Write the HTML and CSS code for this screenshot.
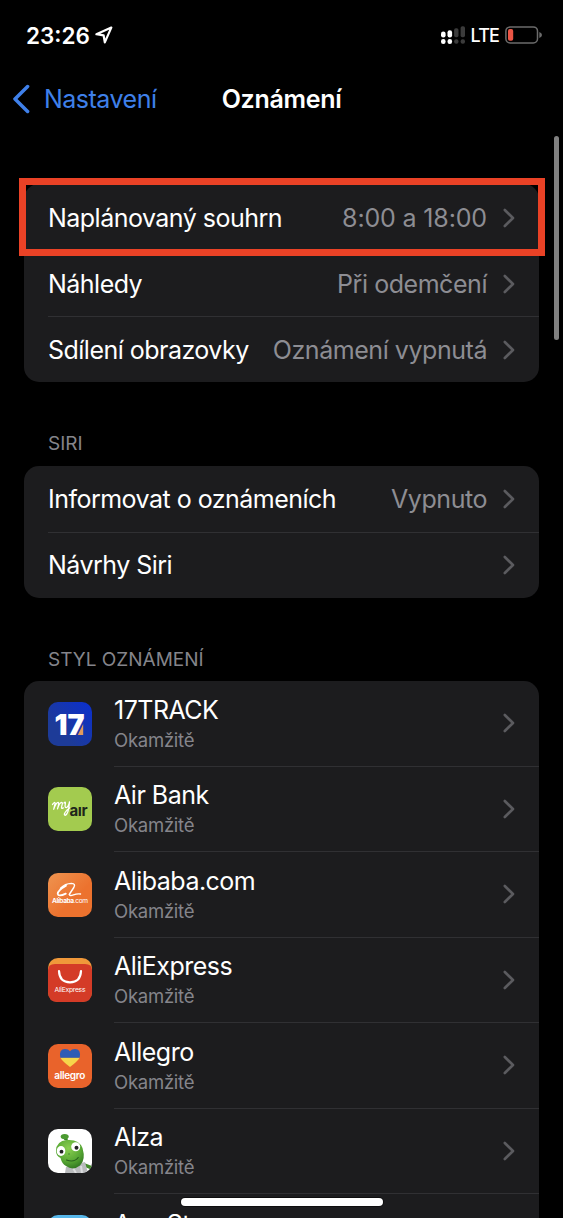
FILE: index.html
```html
<!DOCTYPE html>
<html lang="cs">
<head>
  <meta charset="UTF-8">
  <meta name="viewport" content="width=device-width, initial-scale=1">
  <title>Oznámení</title>
  <link rel="stylesheet" href="styles.css">
</head>
<body>

  <svg class="symbols">
    <symbol id="chevron" viewBox="0 0 12 20">
      <path d="M1.800 2 L10 10 L1.800 18" fill="none" stroke="currentColor" stroke-width="2.600" stroke-linecap="round" stroke-linejoin="round"/>
    </symbol>
  </svg>

  <header class="status-bar">
    <span class="time">23:26</span>
    <svg class="location" viewBox="0 0 18 18">
      <path d="M16.300 1.600 L1.400 8.200 L8.600 9.300 L9.800 16.400 Z" fill="none" stroke="#fff" stroke-width="2.200" stroke-linejoin="round"/>
    </svg>
    <svg class="signal" viewBox="0 0 25 19">
      <g fill="#fff">
        <rect x="0" y="5.500" width="4.600" height="6" rx="2.200"/>
        <rect x="6.500" y="4.300" width="4.600" height="7.200" rx="2.200"/>
        <rect x="0" y="13" width="4.600" height="5" rx="2.200"/>
        <rect x="6.500" y="13" width="4.600" height="5" rx="2.200"/>
      </g>
      <g fill="#3b3b3b">
        <rect x="13.100" y="2.300" width="4.400" height="9" rx="1.800"/>
        <rect x="19.600" y="0.300" width="4.400" height="11" rx="1.800"/>
        <rect x="13.100" y="13.200" width="4.400" height="4.600" rx="2"/>
        <rect x="19.600" y="13.200" width="4.400" height="4.600" rx="2"/>
      </g>
    </svg>
    <span class="network">LTE</span>
    <svg class="battery" viewBox="0 0 38 18">
      <rect x="0.900" y="0.900" width="31.600" height="16" rx="4.200" fill="none" stroke="#6b6b6b" stroke-width="1.500"/>
      <rect x="3" y="3.100" width="5.200" height="11.600" rx="1.800" fill="#eb5545"/>
      <path d="M34.300 6 Q37 7 37 8.900 Q37 10.800 34.300 11.900 Z" fill="#6b6b6b"/>
    </svg>
  </header>

  <nav class="nav-bar">
    <a class="back" href="#">
      <svg viewBox="0 0 18 30"><path d="M15.600 2.600 L3 15 L15.600 27.400" fill="none" stroke="currentColor" stroke-width="3.500" stroke-linecap="round" stroke-linejoin="round"/></svg>
      <span>Nastavení</span>
    </a>
    <h1>Oznámení</h1>
  </nav>

  <main>
    <section class="card">
      <div class="row highlighted">
        <span class="label">Naplánovaný souhrn</span>
        <span class="value time-value">8:00 a 18:00</span>
        <svg class="chevron"><use href="#chevron"/></svg>
      </div>
      <div class="row">
        <span class="label">Náhledy</span>
        <span class="value">Při odemčení</span>
        <svg class="chevron"><use href="#chevron"/></svg>
      </div>
      <div class="row">
        <span class="label">Sdílení obrazovky</span>
        <span class="value">Oznámení vypnutá</span>
        <svg class="chevron"><use href="#chevron"/></svg>
      </div>
    </section>

    <h2>SIRI</h2>
    <section class="card">
      <div class="row">
        <span class="label">Informovat o oznámeních</span>
        <span class="value">Vypnuto</span>
        <svg class="chevron"><use href="#chevron"/></svg>
      </div>
      <div class="row">
        <span class="label">Návrhy Siri</span>
        <svg class="chevron"><use href="#chevron"/></svg>
      </div>
    </section>

    <h2>STYL OZNÁMENÍ</h2>
    <section class="card apps">
      <div class="app">
        <svg class="icon" viewBox="0 0 44 44">
          <defs><linearGradient id="blue" x1="0" y1="1" x2="1" y2="0"><stop offset="0.300" stop-color="#1d3b98"/><stop offset="1" stop-color="#0b2fd0"/></linearGradient></defs>
          <rect width="44" height="44" rx="10" fill="url(#blue)"/>
          <path d="M35.200 22 V33 H29.800 Z" fill="#e39a5c"/>
          <text class="t-17" x="6.500" y="33" textLength="30" lengthAdjust="spacingAndGlyphs">17</text>
        </svg>
        <div class="app-body">
          <div class="app-text"><span class="label">17TRACK</span><span class="sub">Okamžitě</span></div>
          <svg class="chevron"><use href="#chevron"/></svg>
        </div>
      </div>
      <div class="app">
        <svg class="icon" viewBox="0 0 44 44">
          <rect width="44" height="44" rx="10" fill="#a3cb4f"/>
          <path d="M4.500 17.500 q2.500 -3.300 2.600 -1.200 l-1.400 6 q2.400 -7 4.400 -7 q1.300 0 -0.600 6.600 q2 -6.600 4.200 -6.600 q1.400 0 0 4 q-0.800 3 1.600 1.600 M16 16 q1.600 -2 1.400 0.300 q-1 5 1.300 4.200 q1.800 -1 2.800 -5.600 q-0.900 12.500 -4.300 13.400 q-2.300 -0.600 1.600 -5 l2.800 -2.300" fill="none" stroke="#fff" stroke-width="1.250" stroke-linecap="round" stroke-linejoin="round"/>
          <text class="t-air" x="21.500" y="29" textLength="18">aır</text>
        </svg>
        <div class="app-body">
          <div class="app-text"><span class="label">Air Bank</span><span class="sub">Okamžitě</span></div>
          <svg class="chevron"><use href="#chevron"/></svg>
        </div>
      </div>
      <div class="app">
        <svg class="icon" viewBox="0 0 44 44">
          <defs><linearGradient id="orange" x1="0" y1="0" x2="1" y2="1"><stop offset="0" stop-color="#ee9450"/><stop offset="0.600" stop-color="#ec722e"/></linearGradient></defs>
          <rect width="44" height="44" rx="10" fill="url(#orange)"/>
          <path d="M12.500 15.200 Q17 10.600 23.500 10.400 Q28 10.600 25.800 14.500 Q22.200 20 21.200 21.600 Q21.800 23.200 25.500 21.800 Q29 20.600 32.500 21" fill="none" stroke="#fff" stroke-width="1.400" stroke-linecap="round"/>
          <path d="M18 12.600 Q10 17.200 9.700 20.800 Q10.200 24.200 17.800 20.600" fill="none" stroke="#fff" stroke-width="1.800" stroke-linecap="round"/>
          <text class="t-baba" x="4" y="30" textLength="36"><tspan class="heavy">Alibaba</tspan>.com</text>
        </svg>
        <div class="app-body">
          <div class="app-text"><span class="label">Alibaba.com</span><span class="sub">Okamžitě</span></div>
          <svg class="chevron"><use href="#chevron"/></svg>
        </div>
      </div>
      <div class="app">
        <svg class="icon" viewBox="0 0 44 44">
          <rect width="44" height="44" rx="10" fill="#f0983a"/>
          <path d="M0 12 Q0 6 7 6 H37 Q44 6 44 12 V34 Q44 44 34 44 H10 Q0 44 0 34 Z" fill="#d43b27"/>
          <path d="M11 13 Q11.500 24.300 22 24.300 Q32.500 24.300 33 13" fill="none" stroke="#fff" stroke-width="2.200" stroke-linecap="round"/>
          <text class="t-express" x="6.500" y="33.500" textLength="31">AliExpress</text>
        </svg>
        <div class="app-body">
          <div class="app-text"><span class="label">AliExpress</span><span class="sub">Okamžitě</span></div>
          <svg class="chevron"><use href="#chevron"/></svg>
        </div>
      </div>
      <div class="app">
        <svg class="icon" viewBox="0 0 44 44">
          <rect width="44" height="44" rx="10" fill="#e9632b"/>
          <path d="M12.300 13.500 H31.700 Q30 17 22 23 Q14 17 12.300 13.500 Z" fill="#f6d64a"/>
          <path d="M12.300 13.700 Q10.600 5.200 17 5 Q20.500 5 22 7.300 Q23.500 5 27 5 Q33.400 5.200 31.700 13.700 Z" fill="#2f5cb5"/>
          <text class="t-allegro" x="6.300" y="35" textLength="31">allegro</text>
        </svg>
        <div class="app-body">
          <div class="app-text"><span class="label">Allegro</span><span class="sub">Okamžitě</span></div>
          <svg class="chevron"><use href="#chevron"/></svg>
        </div>
      </div>
      <div class="app">
        <svg class="icon" viewBox="0 0 44 44">
          <defs>
            <radialGradient id="green" cx="0.450" cy="0.300" r="0.750"><stop offset="0" stop-color="#8bcf51"/><stop offset="0.600" stop-color="#58a834"/><stop offset="1" stop-color="#2f7420"/></radialGradient>
            <clipPath id="tile"><rect width="44" height="44" rx="10"/></clipPath>
          </defs>
          <rect width="44" height="44" rx="10" fill="#fff"/>
          <g clip-path="url(#tile)">
            <path d="M36 34 L44 37 V41 L37 38 Z" fill="#438c2c"/>
            <path d="M18 38 L37 33 L40 44 H17 Z" fill="#b9bbbd"/>
            <path d="M25 39 L28 44 M33 37 L34 44" stroke="#dcdddf" stroke-width="2"/>
            <path d="M16 11 L17 7 H19 L20 12 Z" fill="#3c842a"/>
            <ellipse cx="16.700" cy="7.600" rx="4" ry="2.700" fill="#4b9a31"/>
            <path d="M8 22 Q8 12 19 11 Q31 10 34.500 19 Q38 31 32 36.500 Q25 42 18 37 Q14 35 12.500 29 Q8 27 8 22 Z" fill="url(#green)"/>
            <ellipse cx="13" cy="22" rx="4.300" ry="5" fill="#fff"/>
            <ellipse cx="27.700" cy="17.800" rx="4.500" ry="4.500" fill="#fff"/>
            <circle cx="13.500" cy="22.700" r="1.900" fill="#222"/>
            <circle cx="28.500" cy="18.700" r="2" fill="#222"/>
            <path d="M18.500 31 Q26 34 30.200 28.500" fill="none" stroke="#285f1d" stroke-width="1.100" stroke-linecap="round"/>
            <circle cx="21" cy="25" r="0.700" fill="#34762a"/>
          </g>
        </svg>
        <div class="app-body">
          <div class="app-text"><span class="label">Alza</span><span class="sub">Okamžitě</span></div>
          <svg class="chevron"><use href="#chevron"/></svg>
        </div>
      </div>
      <div class="app app-cut">
        <svg class="icon" viewBox="0 0 44 44"><rect width="44" height="44" rx="10" fill="#57b7ea"/></svg>
        <span class="label">App Store</span>
      </div>
    </section>
  </main>

  <div class="scrollbar"></div>
  <div class="home-indicator"></div>

</body>
</html>
```

FILE: styles.css
```css
* {
  box-sizing: border-box;
}

body {
  margin: 0;
  width: 563px;
  height: 1218px;
  overflow: hidden;
  position: relative;
  background: #000;
  color: #fff;
  font-family: Inter, "Liberation Sans", sans-serif;
  font-size: 25px;
}

.symbols {
  display: none;
}

/* Status bar */
.status-bar {
  display: flex;
  align-items: center;
  height: 70px;
  padding: 0 20px 0 26px;
}

.time {
  font-size: 22.5px;
  font-weight: 600;
}

.location {
  width: 18px;
  height: 18px;
  margin-left: 5px;
}

.signal {
  width: 25px;
  height: 19px;
  margin-left: auto;
}

.network {
  margin: 0 6px 0 5px;
  font-size: 18px;
  font-weight: 500;
  letter-spacing: -0.9px;
}

.battery {
  width: 38px;
  height: 18px;
}

/* Navigation */
.nav-bar {
  display: grid;
  grid-template-columns: 1fr auto 1fr;
  align-items: center;
  height: 58px;
  padding: 0 12px;
}

.back {
  display: flex;
  align-items: center;
  gap: 14px;
  color: #3f80ea;
  text-decoration: none;
  letter-spacing: -0.5px;
}

.back svg {
  width: 18px;
  height: 30px;
}

h1 {
  margin: 0;
  font-size: 25px;
  font-weight: 600;
  letter-spacing: -0.3px;
}

/* Cards */
main {
  height: 1090px;
  padding: 56px 24px 0;
  overflow: hidden;
}

.card {
  background: #1c1c1e;
  border-radius: 15px;
}

.row {
  display: flex;
  align-items: center;
  height: 66px;
  margin-left: 24px;
  padding-right: 24px;
}

.row + .row {
  border-top: 1px solid #303033;
}

.highlighted {
  position: relative;
  padding-top: 2px;
}

.highlighted::after {
  content: "";
  box-sizing: border-box;
  position: absolute;
  top: -6px;
  left: -29.5px;
  width: 526px;
  height: 78px;
  border: 7px solid #ea4226;
}

.highlighted + .row {
  border-top-color: transparent;
}

.label {
  letter-spacing: -0.52px;
  white-space: nowrap;
}

.value {
  margin-left: auto;
  color: #8d8d93;
  letter-spacing: -0.45px;
  white-space: nowrap;
}

.time-value {
  letter-spacing: -0.15px;
}

.chevron {
  width: 12px;
  height: 20px;
  flex: none;
  margin-left: 16px;
  color: #5b5b5f;
}

.label + .chevron,
.app-text + .chevron {
  margin-left: auto;
}

h2 {
  display: flex;
  align-items: flex-end;
  height: 83.5px;
  margin: 0;
  padding: 0 24px 10.5px;
  font-size: 19px;
  line-height: 22px;
  font-weight: 400;
  color: #85858b;
}

/* Apps */
.apps {
  border-radius: 15px 15px 0 0;
}

.app {
  display: flex;
  align-items: center;
  gap: 22px;
  height: 85.5px;
  padding-left: 24px;
}

.app-cut {
  align-items: flex-start;
  height: 24px;
  padding-top: 20.5px;
}

.app-cut .label {
  margin-top: -6px;
  line-height: 31px;
}

.icon {
  width: 44px;
  height: 44px;
  flex: none;
}

.app-body {
  display: flex;
  align-items: center;
  flex: 1;
  height: 100%;
  padding-right: 24px;
  border-bottom: 1px solid #303033;
}

.app-text {
  display: flex;
  flex-direction: column;
  padding-top: 1px;
}

.app-text .label {
  line-height: 31px;
}

.sub {
  margin-top: 2px;
  font-size: 18.5px;
  line-height: 25px;
  letter-spacing: -0.25px;
  color: #85858b;
}

.icon text {
  fill: #fff;
}

.t-17 {
  font-size: 29px;
  font-weight: 900;
}

.icon .t-air {
  font-size: 15px;
  font-weight: 700;
  fill: #20251a;
}

.t-baba {
  font-size: 6.6px;
}

.heavy {
  font-weight: 700;
}

.t-express {
  font-size: 6.8px;
}

.t-allegro {
  font-size: 10px;
  font-weight: 600;
}

/* Overlays */
.scrollbar {
  position: absolute;
  top: 136px;
  right: 4px;
  width: 5px;
  height: 204px;
  border-radius: 3px;
  background: #808080;
}

.home-indicator {
  position: absolute;
  left: 181px;
  bottom: 12px;
  width: 202px;
  height: 8px;
  border-radius: 4px;
  background: #fff;
  box-shadow: 0 0 0 1px rgba(0,0,0,0.5);
}
```
